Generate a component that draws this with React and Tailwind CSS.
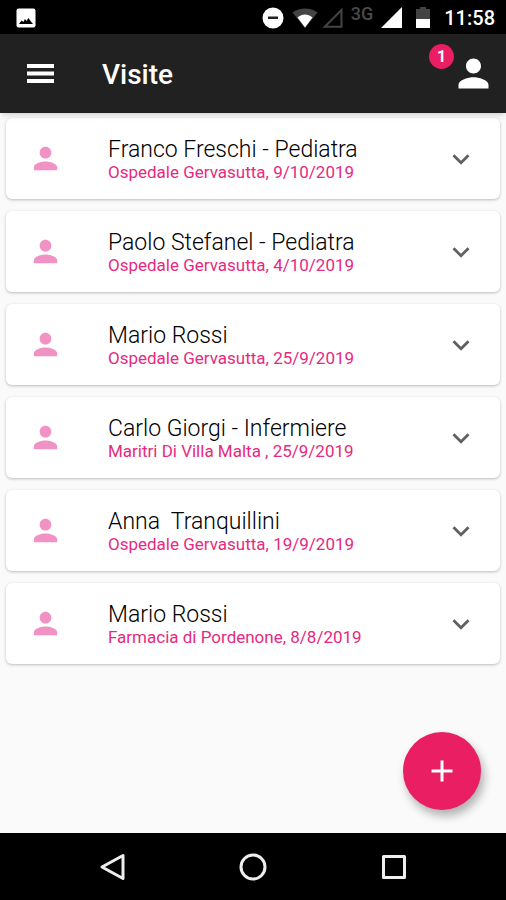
import React from "react";
import {MdAdd, MdExpandMore, MdPerson} from "react-icons/md";

const visits = [
    {name: "Franco Freschi - Pediatra", place: "Ospedale Gervasutta, 9/10/2019"},
    {name: "Paolo Stefanel - Pediatra", place: "Ospedale Gervasutta, 4/10/2019"},
    {name: "Mario Rossi", place: "Ospedale Gervasutta, 25/9/2019"},
    {name: "Carlo Giorgi - Infermiere", place: "Maritri Di Villa Malta , 25/9/2019"},
    {name: "Anna  Tranquillini", place: "Ospedale Gervasutta, 19/9/2019"},
    {name: "Mario Rossi", place: "Farmacia di Pordenone, 8/8/2019"},
];

const StatusBar = () => (
    <div className="flex h-[34px] items-center bg-black pt-px pl-4 pr-[11px] text-white">
        <svg width="20" height="20" viewBox="0 0 20 20" aria-hidden="true">
            <rect x="0.5" y="0.5" width="19" height="19" rx="2" fill="#fff" />
            <path d="M3 16l2.5-3.5 1.8 1.5L9 11l1.5 2L12.5 10l2 3 2.5 3z" fill="#000" />
        </svg>
        <svg className="ml-auto" width="22" height="22" viewBox="0 0 22 22" aria-hidden="true">
            <circle cx="11" cy="11" r="10.5" fill="#fff" />
            <rect x="6" y="9.5" width="10" height="2.5" fill="#222" />
        </svg>
        <svg className="ml-2" width="26" height="20" viewBox="0 0 26 20" aria-hidden="true">
            <path d="M0.5 4.5C7.5-1 18.5-1 25.5 4.5L13 20z" fill="#444" />
            <path d="M5.5 9.5c4.5-4 10.5-4 15 0L13 19.5z" fill="#fff" />
        </svg>
        <svg className="ml-1" width="21" height="21" viewBox="0 0 21 21" aria-hidden="true">
            <path d="M2.8 19.8L19.5 3v16.8z" fill="none" stroke="#444" strokeWidth="2" />
        </svg>
        <span className="mb-2 ml-2 text-lg leading-none font-medium text-[#4a4a4a]">3G</span>
        <svg className="ml-2" width="21" height="21" viewBox="0 0 21 21" aria-hidden="true">
            <path d="M0 21L21 0v21z" fill="#fff" />
        </svg>
        <svg className="ml-3.5" width="14" height="21" viewBox="0 0 14 21" aria-hidden="true">
            <path d="M0 2h4V0h6v2h4v10H0z" fill="#444" />
            <path d="M0 12h14v9H0z" fill="#fff" />
        </svg>
        <span className="ml-3.5 text-xl leading-none font-medium">11:58</span>
    </div>
);

const Header = () => (
    <header className="relative z-10 flex h-[79px] items-center bg-[#212121] pl-[27px] pr-[10px] text-white shadow-md">
        <button type="button" aria-label="Menu">
            <svg width="27" height="19" viewBox="0 0 27 19" fill="#fff" aria-hidden="true">
                <rect width="27" height="4" />
                <rect y="7.5" width="27" height="4" />
                <rect y="15" width="27" height="4" />
            </svg>
        </button>
        <h1 className="ml-12 pt-0.5 text-[28px] leading-8 font-medium">Visite</h1>
        <button type="button" aria-label="Profilo" className="relative ml-auto">
            <MdPerson className="size-[45px]" />
            <span className="absolute -top-[7px] -left-[22px] flex size-[25px] items-center justify-center rounded-full bg-[#e91e63] text-base leading-none font-bold">
                1
            </span>
        </button>
    </header>
);

const VisitCard = ({visit}) => (
    <li className="rounded-md bg-white shadow-[0_1px_3px_rgba(0,0,0,0.25)]">
        <button type="button" aria-expanded="false" className="flex h-[81px] w-full items-center px-[22px] text-left">
            <MdPerson className="size-[35px] shrink-0 text-[#f093c4]" />
            <span className="ml-[45px] min-w-0 flex-1 pt-0.5">
                <span className="block text-[23px] leading-6 font-light whitespace-pre text-black">{visit.name}</span>
                <span className="block text-[17px] leading-5 text-[#e62a80]">{visit.place}</span>
            </span>
            <MdExpandMore className="size-[34px] shrink-0 text-[#616161]" />
        </button>
    </li>
);

const NavBar = () => (
    <nav className="grid h-[67px] grid-cols-3 place-items-center bg-black px-[42px]">
        <button type="button" aria-label="Indietro">
            <svg width="28" height="28" viewBox="0 0 28 28" fill="none" stroke="#eee" strokeWidth="3" strokeLinejoin="round" aria-hidden="true">
                <path d="M4 14L25 2.5v23z" />
            </svg>
        </button>
        <button type="button" aria-label="Home">
            <svg width="28" height="28" viewBox="0 0 28 28" fill="none" stroke="#eee" strokeWidth="3" aria-hidden="true">
                <circle cx="14" cy="14" r="12" />
            </svg>
        </button>
        <button type="button" aria-label="Recenti">
            <svg width="28" height="28" viewBox="0 0 28 28" fill="none" stroke="#eee" strokeWidth="3" strokeLinejoin="round" aria-hidden="true">
                <rect x="3.5" y="3.5" width="21" height="21" />
            </svg>
        </button>
    </nav>
);

const App = () => (
    <div className="flex min-h-screen flex-col bg-[#fafafa] font-['Roboto',sans-serif]">
        <StatusBar />
        <Header />
        <main className="relative flex-1">
            <ul className="flex flex-col gap-3 px-1.5 pt-[5px]">
                {visits.map((visit, index) => (
                    <VisitCard key={index} visit={visit} />
                ))}
            </ul>
            <button
                type="button"
                aria-label="Aggiungi visita"
                className="absolute right-[25px] bottom-[23px] flex size-[78px] items-center justify-center rounded-full bg-[#e91e63] text-white shadow-[3px_6px_10px_rgba(0,0,0,0.3)]"
            >
                <MdAdd className="size-9" />
            </button>
        </main>
        <NavBar />
    </div>
);

export default App;
